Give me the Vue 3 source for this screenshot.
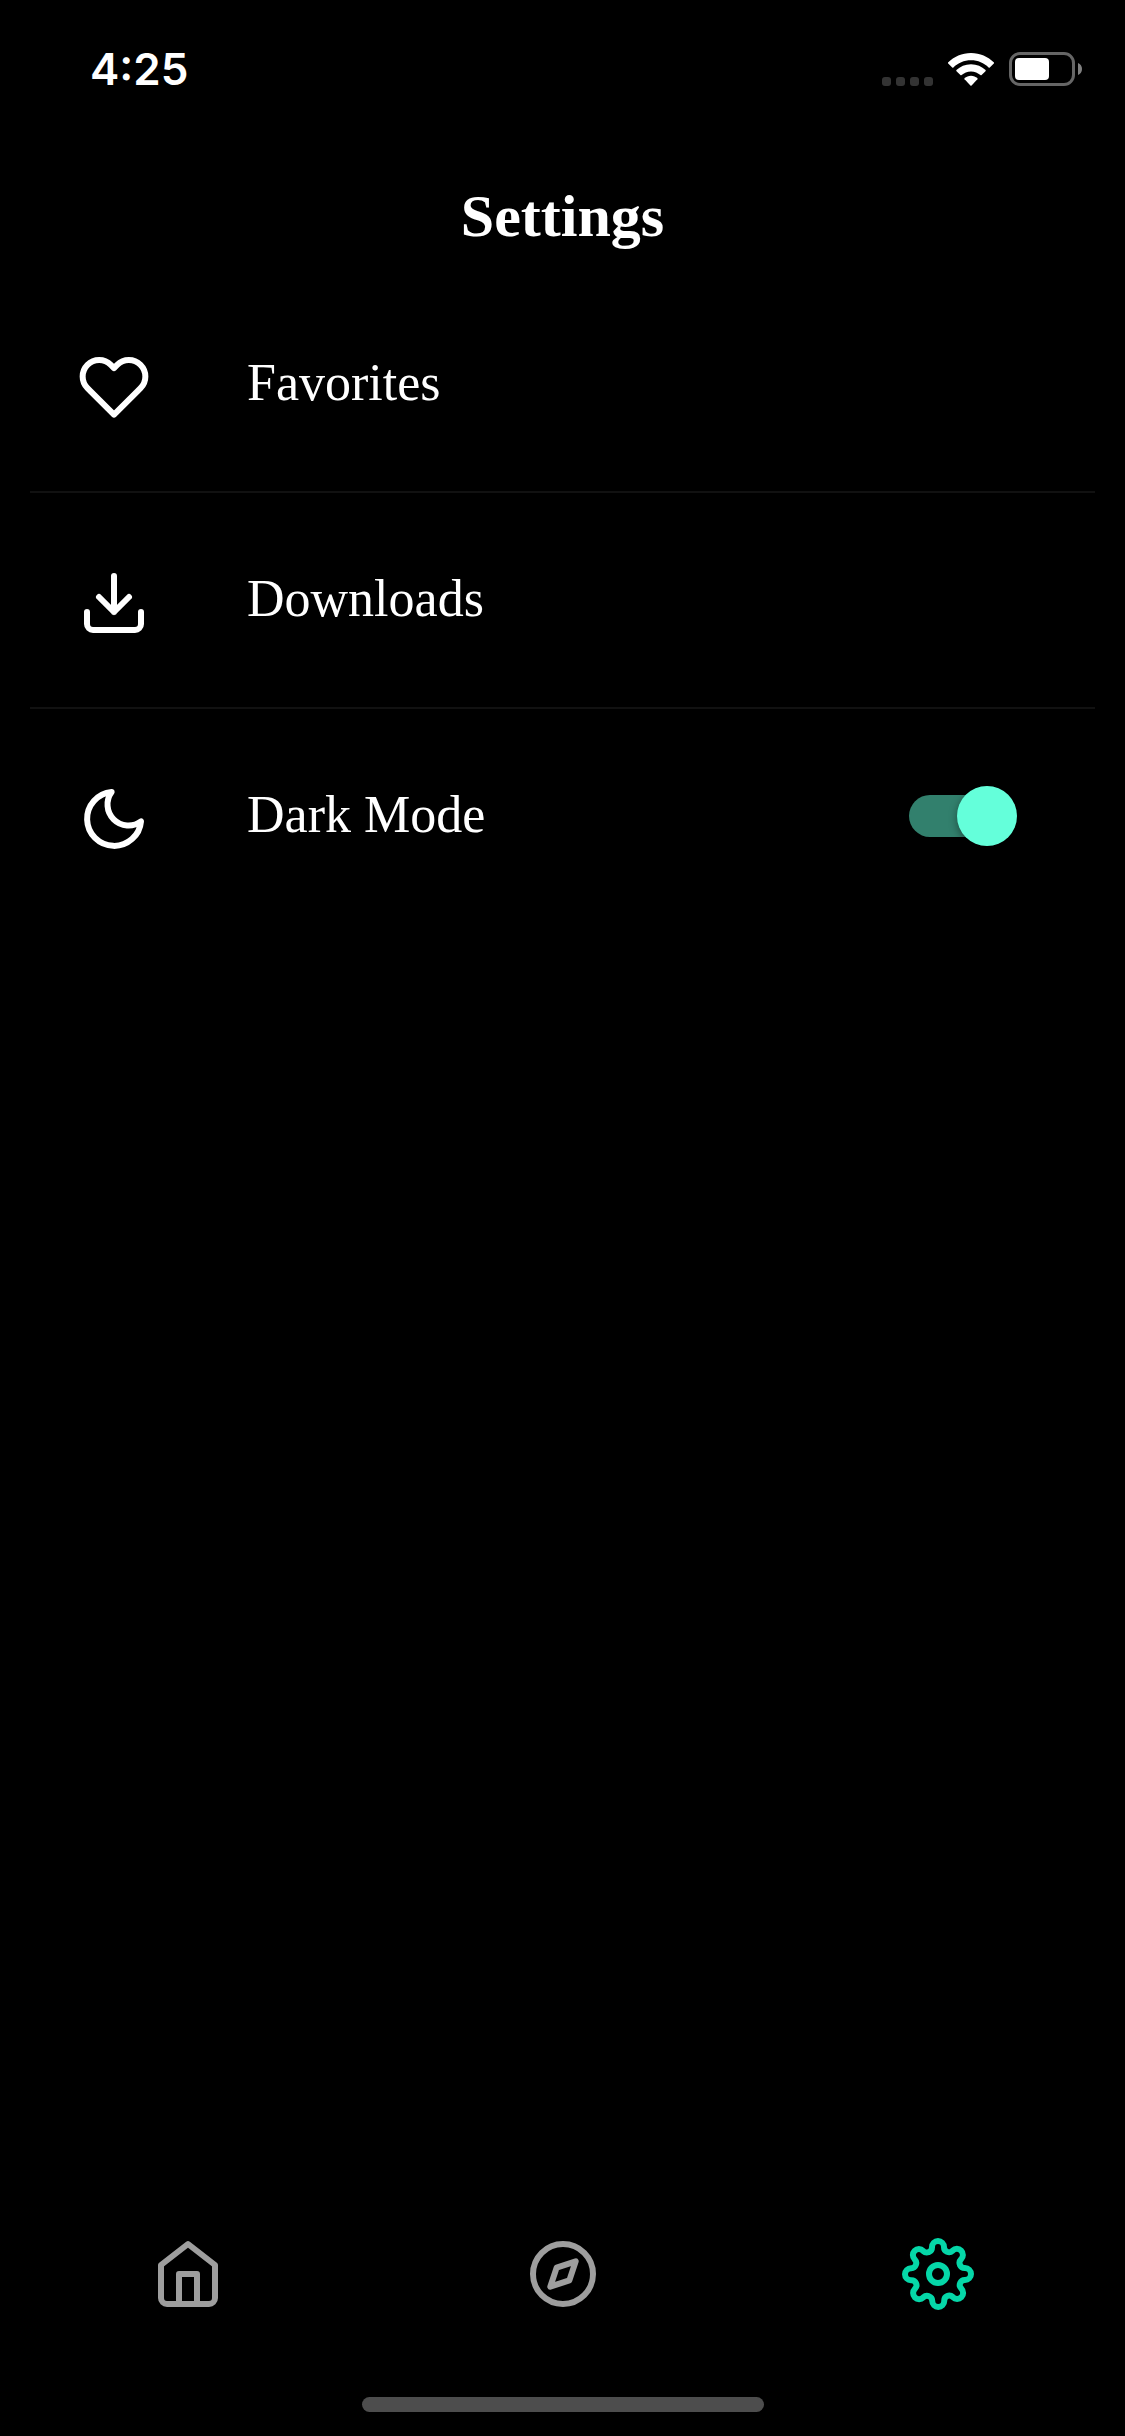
<script setup>
import { ref } from 'vue'

const darkMode = ref(true)
const activeTab = ref('settings')
</script>

<template>
  <div class="screen">
    <div class="status">
      <span class="time">4:25</span>
      <div class="indicators">
        <div class="signal"><i></i><i></i><i></i><i></i></div>
        <svg class="wifi" viewBox="0 0 46 33" aria-hidden="true">
          <path d="M23 0C14 0 6 3.600 0 9.500Q-.2 10 .2 10.500L4.200 14.400Q4.800 14.900 5.400 14.400C10 10 16 7.300 23 7.300S36 10 40.600 14.400Q41.200 14.900 41.800 14.400L45.800 10.500Q46.200 10 46 9.500C40 3.600 32 0 23 0Z" />
          <path d="M23 11.200C17.200 11.200 12.200 13.500 8.400 17.100Q8 17.700 8.500 18.200L12.400 22.100Q13 22.600 13.600 22.100C16 19.800 19.300 18.400 23 18.400S30 19.800 32.400 22.100Q33 22.600 33.600 22.100L37.500 18.200Q38 17.700 37.600 17.100C33.800 13.500 28.800 11.200 23 11.200Z" />
          <path d="M23 22.700C20.500 22.700 18.300 23.600 16.600 25.100Q16.200 25.600 16.600 26.200L22.400 32.400Q23 33 23.600 32.400L29.400 26.200Q29.800 25.600 29.400 25.100C27.700 23.600 25.500 22.700 23 22.700Z" />
        </svg>
        <svg class="battery" viewBox="0 0 74 34" aria-hidden="true">
          <rect x="1.500" y="1.500" width="63" height="31" rx="9.500" fill="none" stroke="#666" stroke-width="3" />
          <rect x="6" y="6" width="34" height="22" rx="4" fill="#fff" />
          <path d="M69 11C71.500 12 73 14.300 73 17S71.500 22 69 23Z" fill="#808080" />
        </svg>
      </div>
    </div>

    <header class="header">
      <h1>Settings</h1>
    </header>

    <main class="list">
      <a class="row" href="#favorites">
        <svg class="icon" viewBox="0 0 24 24" aria-hidden="true">
          <path d="M20.840 4.610a5.500 5.500 0 0 0-7.780 0L12 5.670l-1.060-1.060a5.500 5.500 0 0 0-7.780 7.780l1.060 1.060L12 21.230l7.780-7.780 1.060-1.060a5.500 5.500 0 0 0 0-7.780z" />
        </svg>
        <span class="label">Favorites</span>
      </a>
      <a class="row" href="#downloads">
        <svg class="icon" viewBox="0 0 24 24" aria-hidden="true">
          <path d="M21 15v4a2 2 0 0 1-2 2H5a2 2 0 0 1-2-2v-4" />
          <path d="M7 10l5 5 5-5M12 15V3" />
        </svg>
        <span class="label">Downloads</span>
      </a>
      <div class="row">
        <svg class="icon" viewBox="0 0 24 24" aria-hidden="true">
          <path d="M21 12.790A9 9 0 1 1 11.210 3 7 7 0 0 0 21 12.790z" />
        </svg>
        <label class="label" for="dark-mode">Dark Mode</label>
        <input id="dark-mode" v-model="darkMode" class="toggle" type="checkbox" role="switch" />
      </div>
    </main>

    <nav class="tabs">
      <button type="button" aria-label="Home" :class="{ active: activeTab === 'home' }" @click="activeTab = 'home'">
        <svg class="icon" viewBox="0 0 24 24" aria-hidden="true">
          <path d="M3 9l9-7 9 7v11a2 2 0 0 1-2 2H5a2 2 0 0 1-2-2z" />
          <path d="M9 22V12h6v10" />
        </svg>
      </button>
      <button type="button" aria-label="Explore" :class="{ active: activeTab === 'explore' }" @click="activeTab = 'explore'">
        <svg class="icon" viewBox="0 0 24 24" aria-hidden="true">
          <circle cx="12" cy="12" r="10" />
          <path d="M16.240 7.760l-2.120 6.360-6.360 2.120 2.120-6.360z" />
        </svg>
      </button>
      <button type="button" aria-label="Settings" :class="{ active: activeTab === 'settings' }" @click="activeTab = 'settings'">
        <svg class="icon" viewBox="0 0 24 24" aria-hidden="true">
          <circle cx="12" cy="12" r="3" />
          <path d="M19.400 15a1.650 1.650 0 0 0 .33 1.820l.06.06a2 2 0 0 1 0 2.830 2 2 0 0 1-2.830 0l-.06-.06a1.650 1.650 0 0 0-1.820-.33 1.650 1.650 0 0 0-1 1.510V21a2 2 0 0 1-2 2 2 2 0 0 1-2-2v-.09A1.650 1.650 0 0 0 9 19.400a1.650 1.650 0 0 0-1.820.33l-.06.06a2 2 0 0 1-2.830 0 2 2 0 0 1 0-2.830l.06-.06a1.650 1.650 0 0 0 .33-1.820 1.650 1.650 0 0 0-1.510-1H3a2 2 0 0 1-2-2 2 2 0 0 1 2-2h.09A1.650 1.650 0 0 0 4.600 9a1.650 1.650 0 0 0-.33-1.820l-.06-.06a2 2 0 0 1 0-2.830 2 2 0 0 1 2.830 0l.06.06a1.650 1.650 0 0 0 1.820.33H9a1.650 1.650 0 0 0 1-1.510V3a2 2 0 0 1 2-2 2 2 0 0 1 2 2v.09a1.650 1.650 0 0 0 1 1.510 1.650 1.650 0 0 0 1.820-.33l.06-.06a2 2 0 0 1 2.830 0 2 2 0 0 1 0 2.830l-.06.06a1.650 1.650 0 0 0-.33 1.820V9a1.650 1.650 0 0 0 1.510 1H21a2 2 0 0 1 2 2 2 2 0 0 1-2 2h-.09a1.650 1.650 0 0 0-1.510 1z" />
        </svg>
      </button>
    </nav>
    <div class="home-indicator"></div>
  </div>
</template>

<style>
body {
  margin: 0;
  background: #000;
}
</style>

<style scoped>
.screen {
  display: flex;
  flex-direction: column;
  box-sizing: border-box;
  min-height: 100vh;
  padding-bottom: 24px;
  background: #000;
  color: #fff;
  font-family: "Liberation Serif", "Times New Roman", serif;
}

.status {
  display: flex;
  align-items: center;
  justify-content: space-between;
  height: 138px;
  padding: 0 42px 0 90px;
}

.time {
  font: 600 44px/56px Inter, sans-serif;
}

.indicators {
  display: flex;
  align-items: flex-end;
  gap: 15px;
}

.signal {
  display: flex;
  gap: 5px;
}

.signal i {
  width: 9px;
  height: 9px;
  border-radius: 3px;
  background: #333;
}

.wifi {
  width: 46px;
  height: 33px;
  fill: #fff;
}

.battery {
  width: 74px;
  height: 34px;
}

.header {
  display: flex;
  justify-content: center;
  padding: 48px 0 31px;
}

h1 {
  margin: 0;
  font-size: 60px;
  font-weight: 700;
  line-height: 60px;
}

.list {
  flex: 1;
  padding: 0 30px;
}

.row {
  display: flex;
  align-items: flex-start;
  box-sizing: border-box;
  height: 216px;
  padding: 74px 78px 0 48px;
  border-bottom: 2px solid #111;
  color: #fff;
  text-decoration: none;
}

.row:last-child {
  border-bottom: 0;
}

.icon {
  display: block;
  flex: none;
  width: 72px;
  height: 72px;
  fill: none;
  stroke: currentColor;
  stroke-width: 2;
  stroke-linecap: round;
  stroke-linejoin: round;
}

.label {
  flex: 1;
  margin-left: 97px;
  font-size: 52px;
  line-height: 64px;
}

.toggle {
  display: grid;
  align-items: center;
  flex: none;
  width: 108px;
  height: 66px;
  margin: 0;
  appearance: none;
}

.toggle::before,
.toggle::after {
  content: "";
  grid-area: 1 / 1;
}

.toggle::before {
  width: 102px;
  height: 42px;
  border-radius: 21px;
  background: #555;
}

.toggle::after {
  width: 60px;
  height: 60px;
  border-radius: 50%;
  background: #ddd;
  box-shadow: 0 3px 9px rgba(0, 0, 0, 0.4);
}

.toggle:checked::before {
  background: #32806d;
}

.toggle:checked::after {
  justify-self: end;
  background: #64ffda;
}

.tabs {
  display: flex;
}

.tabs button {
  display: flex;
  flex: 1;
  justify-content: center;
  padding: 15px 0 87px;
  border: 0;
  background: none;
  color: #9e9e9e;
}

.tabs button.active {
  color: #05d7a8;
}

.home-indicator {
  align-self: center;
  width: 402px;
  height: 15px;
  border-radius: 8px;
  background: #4d4d4d;
}
</style>
